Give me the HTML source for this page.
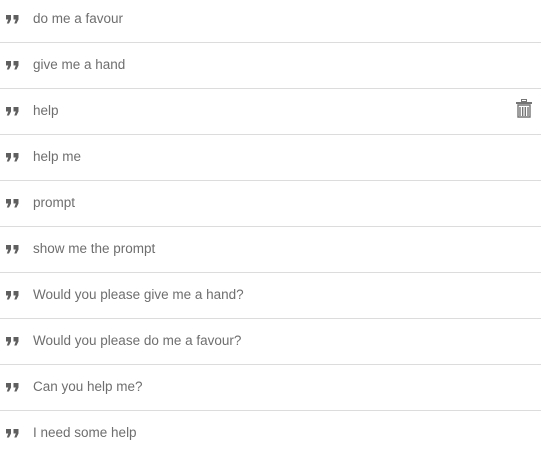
<!DOCTYPE html>
<html><head><style>
html,body{margin:0;padding:0;}
body{width:541px;height:449px;overflow:hidden;background:#fff;font-family:"Liberation Sans",sans-serif;position:relative;}
.r{position:absolute;left:0;width:541px;height:46px;}
.line{position:absolute;left:0;bottom:0;width:541px;height:1px;background:#dcdcdc;}
.q{position:absolute;left:6px;top:18px;display:block;}
.t{position:absolute;left:33px;top:14px;font-size:13.5px;line-height:16px;color:#6e6e6e;white-space:nowrap;}
.d{position:absolute;left:516px;top:10px;display:block;}
</style></head><body>
<svg width="0" height="0" style="position:absolute;left:0;top:0"><defs><g id="qq"><path d="M0 0h5v4.5L3 8.5H0.8L2.3 4.5H0z" fill="#5f5f5f"/><path d="M7.5 0h5v4.5L10.5 8.5H8.3L9.8 4.5H7.5z" fill="#5f5f5f"/></g></defs></svg>
<div class="r" style="top:-3px"><svg class="q" width="13" height="9"><use href="#qq"/></svg><span class="t">do me a favour</span><div class="line"></div></div>
<div class="r" style="top:43px"><svg class="q" width="13" height="9"><use href="#qq"/></svg><span class="t">give me a hand</span><div class="line"></div></div>
<div class="r" style="top:89px"><svg class="q" width="13" height="9"><use href="#qq"/></svg><span class="t">help</span>
<svg class="d" width="16" height="19" viewBox="0 0 16 19"><rect x="5.5" y="0.5" width="5" height="2" fill="none" stroke="#757575"/><rect x="0" y="3" width="16" height="2" fill="#757575"/><path d="M2 6h12v12H2z M4 8v9 M6.7 8v9 M9.3 8v9 M12 8v9" fill="none" stroke="#757575" stroke-width="1.4"/></svg><div class="line"></div></div>
<div class="r" style="top:135px"><svg class="q" width="13" height="9"><use href="#qq"/></svg><span class="t">help me</span><div class="line"></div></div>
<div class="r" style="top:181px"><svg class="q" width="13" height="9"><use href="#qq"/></svg><span class="t">prompt</span><div class="line"></div></div>
<div class="r" style="top:227px"><svg class="q" width="13" height="9"><use href="#qq"/></svg><span class="t">show me the prompt</span><div class="line"></div></div>
<div class="r" style="top:273px"><svg class="q" width="13" height="9"><use href="#qq"/></svg><span class="t">Would you please give me a hand?</span><div class="line"></div></div>
<div class="r" style="top:319px"><svg class="q" width="13" height="9"><use href="#qq"/></svg><span class="t">Would you please do me a favour?</span><div class="line"></div></div>
<div class="r" style="top:365px"><svg class="q" width="13" height="9"><use href="#qq"/></svg><span class="t">Can you help me?</span><div class="line"></div></div>
<div class="r" style="top:411px"><svg class="q" width="13" height="9"><use href="#qq"/></svg><span class="t">I need some help</span></div>
</body></html>
